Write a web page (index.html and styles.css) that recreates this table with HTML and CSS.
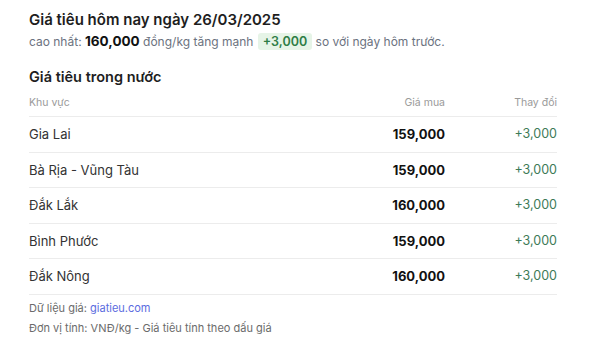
FILE: index.html
```html
<!DOCTYPE html>
<html lang="vi">
<head>
<meta charset="utf-8">
<link rel="stylesheet" href="styles.css">
</head>
<body>
<div class="page">
  <h1 class="title">Giá tiêu hôm nay ngày 26/03/2025</h1>
  <p class="summary">cao nhất: <strong class="max">160,000</strong> đồng/kg tăng mạnh <span class="badge">+3,000</span> so với ngày hôm trước.</p>
  <h2 class="section">Giá tiêu trong nước</h2>
  <div class="table">
    <div class="row head">
      <div class="c-name">Khu vực</div>
      <div class="c-price">Giá mua</div>
      <div class="c-change">Thay đổi</div>
    </div>
    <div class="row">
      <div class="c-name">Gia Lai</div>
      <div class="c-price">159,000</div>
      <div class="c-change">+3,000</div>
    </div>
    <div class="row">
      <div class="c-name">Bà Rịa - Vũng Tàu</div>
      <div class="c-price">159,000</div>
      <div class="c-change">+3,000</div>
    </div>
    <div class="row">
      <div class="c-name">Đắk Lắk</div>
      <div class="c-price">160,000</div>
      <div class="c-change">+3,000</div>
    </div>
    <div class="row">
      <div class="c-name">Bình Phước</div>
      <div class="c-price">159,000</div>
      <div class="c-change">+3,000</div>
    </div>
    <div class="row">
      <div class="c-name">Đắk Nông</div>
      <div class="c-price">160,000</div>
      <div class="c-change">+3,000</div>
    </div>
  </div>
  <p class="note first">Dữ liệu giá: <a class="link" href="#">giatieu.com</a></p>
  <p class="note">Đơn vị tính: VNĐ/kg - Giá tiêu tính theo dấu giá</p>
</div>
</body>
</html>
```
FILE: styles.css
```css
* { box-sizing: border-box; }
html, body { margin: 0; padding: 0; background: #fff; }
body {
  font-family: Inter, "Noto Sans", "DejaVu Sans", sans-serif;
  color: #222;
}
.page {
  padding: 10px 44px 0 29px;
}
.title {
  margin: 0;
  font-size: 15px;
  line-height: 20px;
  font-weight: 600;
  color: #1e1e1e;
}
.summary {
  margin: 0;
  font-size: 12px;
  line-height: 22px;
  color: #6b7280;
}
.max {
  font-size: 13.5px;
  font-weight: 700;
  color: #111;
}
.badge {
  display: inline-block;
  margin: 0 0 0 1px;
  padding: 0 5px;
  line-height: 17px;
  font-size: 12.5px;
  font-weight: 600;
  color: #2e7d46;
  background: #e6f4e7;
  border-radius: 3px;
}
.section {
  margin: 14px 0 0;
  font-size: 14.5px;
  line-height: 20px;
  font-weight: 600;
  color: #1e1e1e;
}
.table {
  margin-top: 9px;
}
.row {
  display: grid;
  grid-template-columns: 1fr 120px 112px;
  border-bottom: 1px solid #ececec;
  padding: 10px 0;
  font-size: 13px;
  line-height: 14.5px;
  color: #333;
}
.row.head {
  padding: 0 0 6px;
  font-size: 10.5px;
  line-height: 14px;
  color: #9a9a9a;
}
.c-price, .c-change { text-align: right; }
.row .c-price {
  font-size: 13px;
  font-weight: 700;
  color: #111;
}
.row .c-change {
  font-size: 12.5px;
  color: #3d7a57;
}
.row.head .c-price {
  font-size: 10.5px;
  font-weight: 400;
  color: #9a9a9a;
}
.row.head .c-change {
  font-size: 10.5px;
  color: #9a9a9a;
}
.note {
  margin: 0;
  font-size: 11px;
  line-height: 20px;
  color: #6b6b6b;
}
.note.first { margin-top: 3px; }
.link {
  color: #5b6be0;
  text-decoration: none;
}
```
